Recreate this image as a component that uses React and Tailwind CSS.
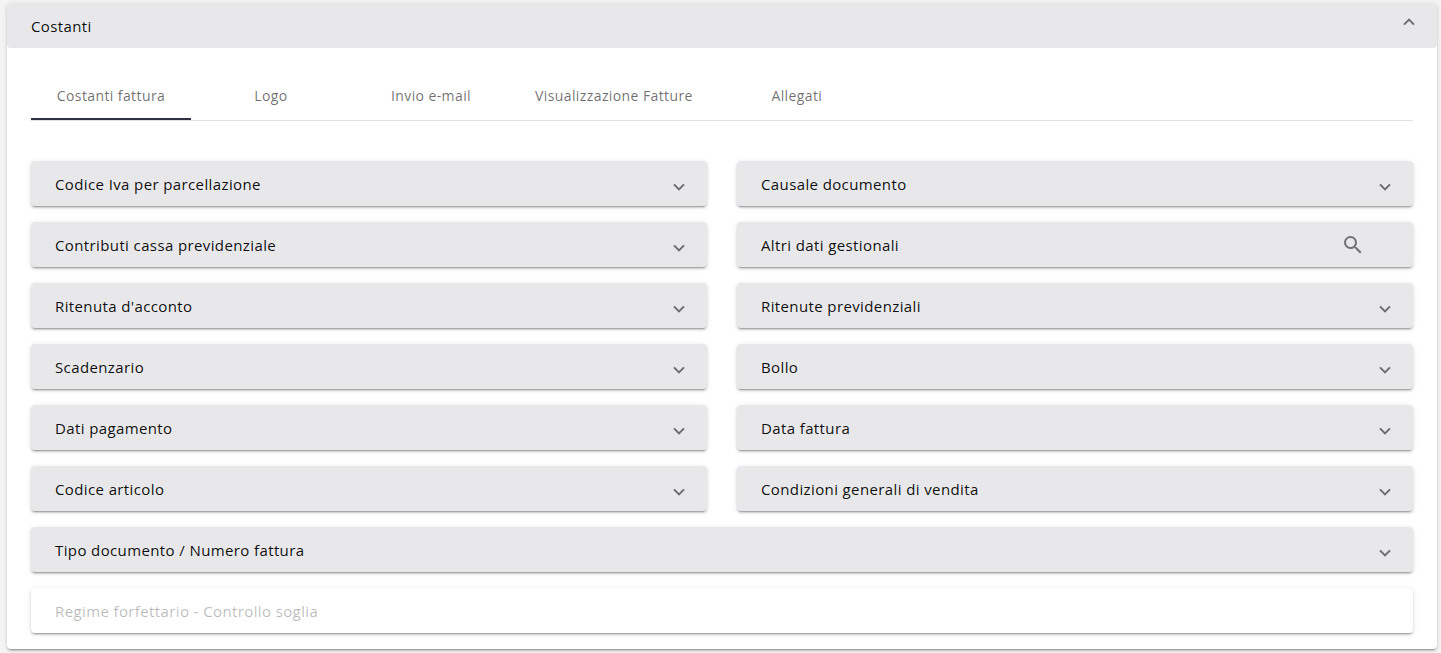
import React from 'react'

const tabs = ['Costanti fattura', 'Logo', 'Invio e-mail', 'Visualizzazione Fatture', 'Allegati']

const panels = [
  { title: 'Codice Iva per parcellazione' },
  { title: 'Causale documento' },
  { title: 'Contributi cassa previdenziale' },
  { title: 'Altri dati gestionali', search: true },
  { title: "Ritenuta d'acconto" },
  { title: 'Ritenute previdenziali' },
  { title: 'Scadenzario' },
  { title: 'Bollo' },
  { title: 'Dati pagamento' },
  { title: 'Data fattura' },
  { title: 'Codice articolo' },
  { title: 'Condizioni generali di vendita' },
  { title: 'Tipo documento / Numero fattura', wide: true },
  { title: 'Regime forfettario - Controllo soglia', wide: true, disabled: true },
]

const elevation = 'shadow-[0_3px_1px_-2px_rgba(0,0,0,0.2),0_2px_2px_0_rgba(0,0,0,0.14),0_1px_5px_0_rgba(0,0,0,0.12)]'

function Chevron({ up }) {
  return (
    <svg width="12" height="8" viewBox="0 0 12 8" fill="none" stroke="#6c6c6e" strokeWidth="2">
      <path d={up ? 'M1 6.6 6 1.6 11 6.6' : 'M1 1.4 6 6.4 11 1.4'} />
    </svg>
  )
}

function SearchIcon() {
  return (
    <svg width="24" height="24" viewBox="0 0 24 24" fill="#707074">
      <path d="M15.5 14h-.79l-.28-.27A6.471 6.471 0 0 0 16 9.5 6.5 6.5 0 1 0 9.5 16c1.61 0 3.09-.59 4.23-1.57l.27.28v.79l5 4.99L20.49 19l-4.99-5zm-6 0C7.01 14 5 11.99 5 9.5S7.01 5 9.5 5 14 7.01 14 9.5 11.99 14 9.5 14z" />
    </svg>
  )
}

function Panel({ title, search, wide, disabled }) {
  return (
    <div
      className={`flex h-[45px] items-center justify-between rounded px-6 ${elevation} ${wide ? 'col-span-2' : ''} ${
        disabled ? 'bg-white text-black/28' : 'bg-[#e8e8ea] text-black/95'
      }`}
    >
      <span>{title}</span>
      {search && <span className="mr-6"><SearchIcon /></span>}
      {!search && !disabled && <span className="-mr-0.5 pt-[6px]"><Chevron /></span>}
    </div>
  )
}

export default function App() {
  return (
    <div className="h-[653px] overflow-hidden bg-[#f4f4f4] pt-[3px] pr-1 pl-[7px] font-['Open_Sans','Noto_Sans',sans-serif] text-[15px] leading-5 tracking-[0.385px]">
      <div className={`h-[646px] rounded bg-white ${elevation}`}>
        <div className="flex h-[45px] items-center justify-between rounded bg-[#e8e8ea] px-6 text-black/95">
          <span className="pt-px">Costanti</span>
          <span className="-mr-0.5 pb-[7px]"><Chevron up /></span>
        </div>
        <div className="px-6 pt-6">
          <div className="flex h-[49px] border-b border-black/12 text-sm tracking-[0.4px] text-black/58">
            {tabs.map((tab, i) => (
              <div
                key={tab}
                className={`flex h-12 min-w-40 items-center justify-center px-6 ${i === 0 ? 'border-b-2 border-[#2f2f45] pt-0.5' : ''}`}
              >
                {tab}
              </div>
            ))}
          </div>
          <div className="mt-10 grid grid-cols-2 gap-x-[30px] gap-y-4">
            {panels.map((panel) => (
              <Panel key={panel.title} {...panel} />
            ))}
          </div>
        </div>
      </div>
    </div>
  )
}
